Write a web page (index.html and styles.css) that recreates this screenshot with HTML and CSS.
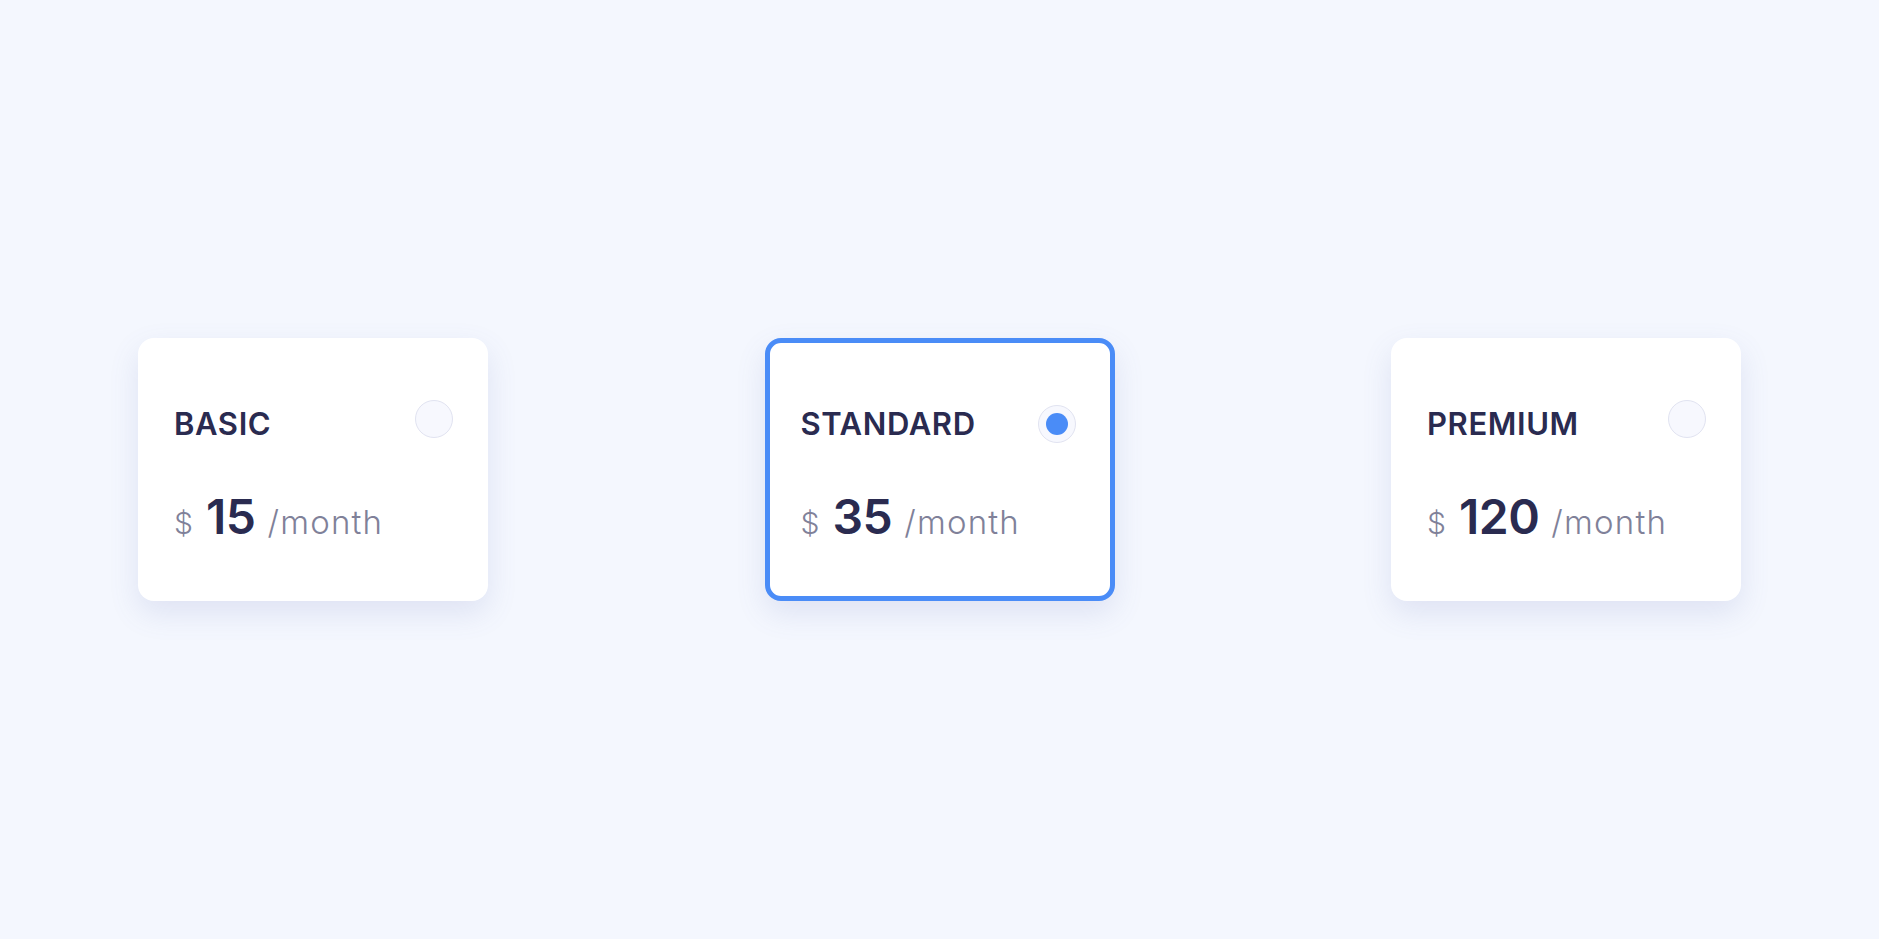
FILE: index.html
```html
<!DOCTYPE html>
<html lang="en">
<head>
<meta charset="utf-8">
<title>Plans</title>
<link rel="stylesheet" href="styles.css">
</head>
<body>
<main class="plans">
  <div class="card">
    <span class="radio"></span>
    <div class="title">BASIC</div>
    <div class="price"><span class="cur">$</span><span class="num">15</span><span class="per">/month</span></div>
  </div>
  <div class="card card--selected">
    <span class="radio radio--on"></span>
    <div class="title">STANDARD</div>
    <div class="price"><span class="cur">$</span><span class="num">35</span><span class="per">/month</span></div>
  </div>
  <div class="card">
    <span class="radio"></span>
    <div class="title">PREMIUM</div>
    <div class="price"><span class="cur">$</span><span class="num">120</span><span class="per">/month</span></div>
  </div>
</main>
</body>
</html>
```

FILE: styles.css
```css
* { box-sizing: border-box; }
html, body { margin: 0; padding: 0; }
body {
  background: #f4f7fe;
  font-family: "Inter", "Noto Sans", sans-serif;
  height: 100vh;
}
.plans {
  height: 100%;
  display: flex;
  align-items: center;
  justify-content: space-between;
  padding: 0 138px;
}
.card {
  position: relative;
  width: 350px;
  height: 263px;
  background: #ffffff;
  border: 5px solid transparent;
  border-radius: 16px;
  padding: 66px 31px 0;
  box-shadow: 0 12px 30px rgba(90, 105, 175, 0.14);
}
.card--selected {
  border-color: #4a8cf7;
}
.title {
  font-size: 31px;
  line-height: 30px;
  font-weight: 600;
  letter-spacing: 0.6px;
  color: #2a2b50;
}
.price {
  display: flex;
  align-items: baseline;
  margin-top: 54px;
  color: #808199;
}
.cur {
  font-size: 30px;
  line-height: 30px;
  font-weight: 300;
}
.num {
  font-size: 48px;
  line-height: 48px;
  font-weight: 600;
  color: #2a2b50;
  margin: 0 12px 0 13px;
  letter-spacing: -0.5px;
}
.per {
  font-size: 33px;
  line-height: 30px;
  font-weight: 300;
  letter-spacing: 1.2px;
}
.radio {
  position: absolute;
  top: 57px;
  right: 30px;
  width: 38px;
  height: 38px;
  border-radius: 50%;
  background: #f7f8fe;
  border: 1px solid #e1e3f1;
}
.card--selected .radio {
  top: 62px;
  right: 34px;
}
.radio--on::after {
  content: "";
  position: absolute;
  left: 7px;
  top: 7px;
  width: 22px;
  height: 22px;
  border-radius: 50%;
  background: #4a8cf7;
}
```
